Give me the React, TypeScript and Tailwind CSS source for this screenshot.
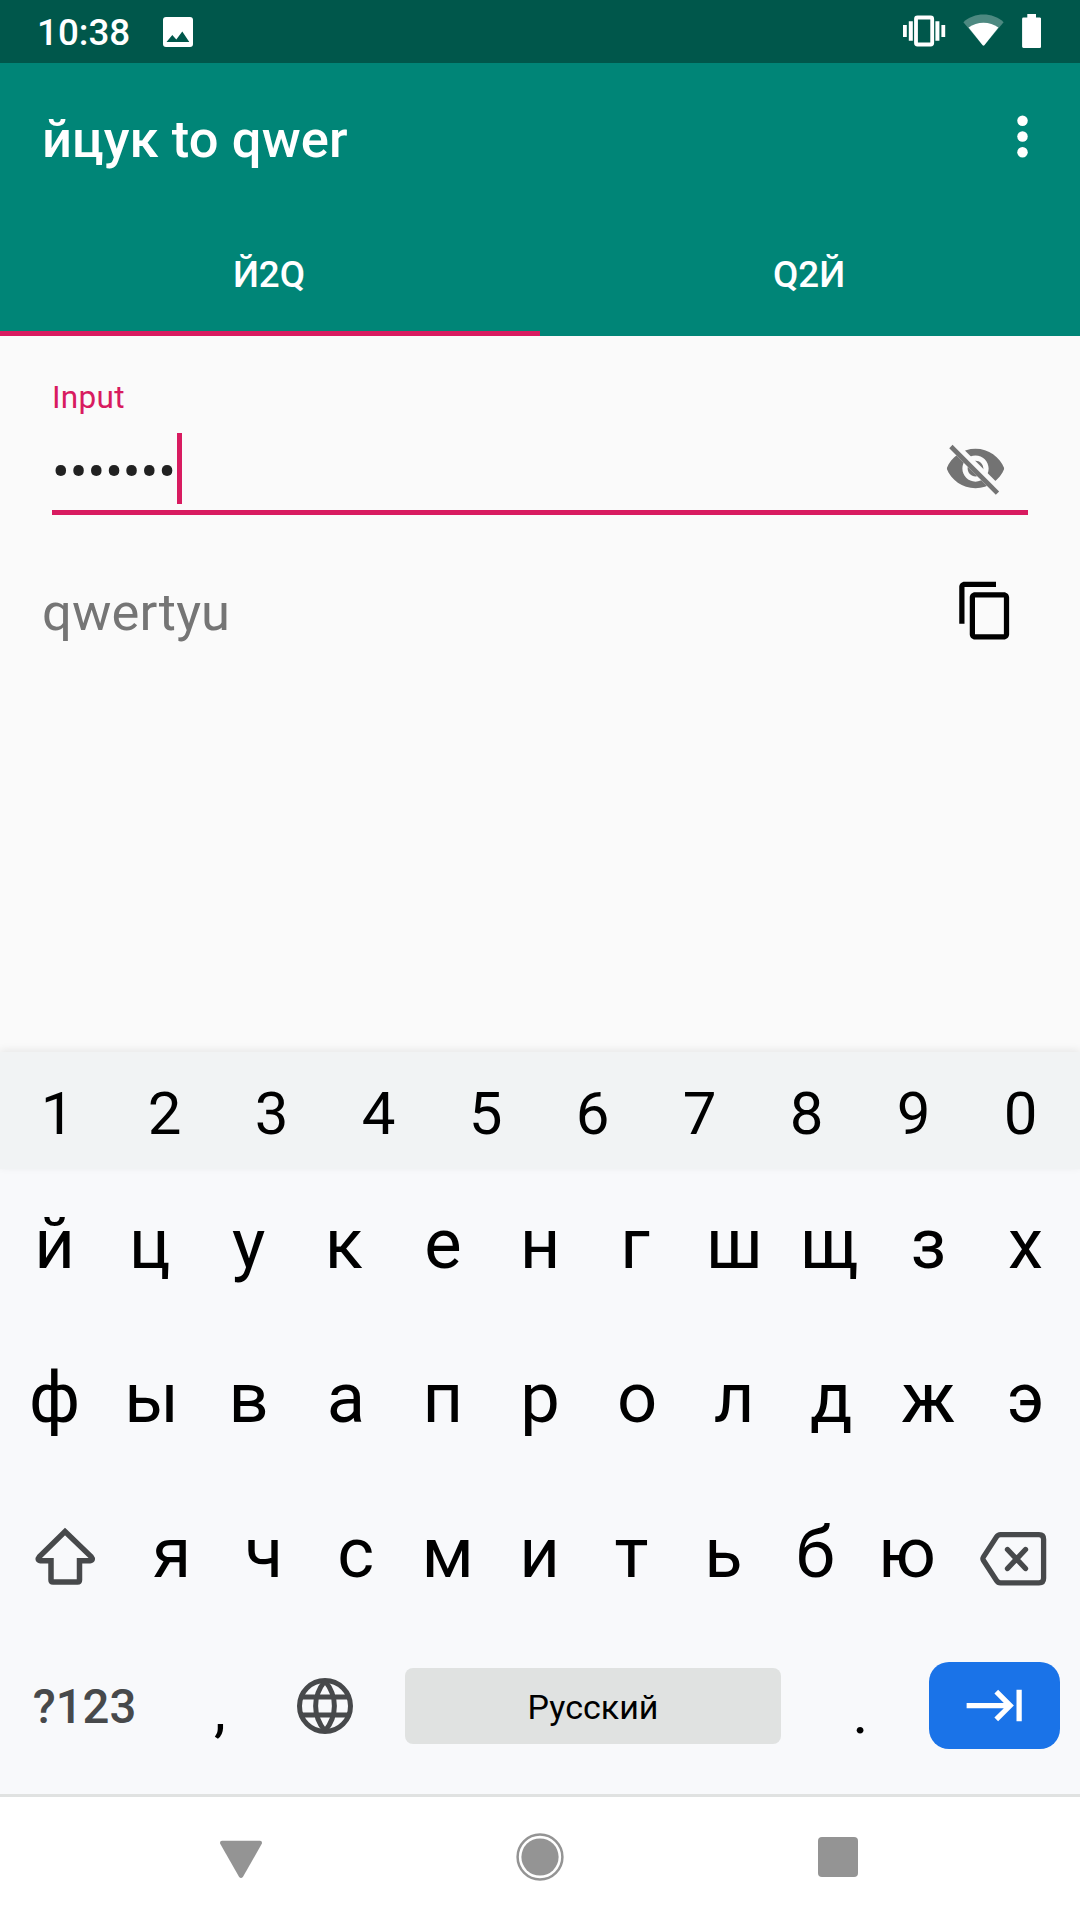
import React from 'react';

const digits = ['1', '2', '3', '4', '5', '6', '7', '8', '9', '0'];
const topRow = ['й', 'ц', 'у', 'к', 'е', 'н', 'г', 'ш', 'щ', 'з', 'х'];
const middleRow = ['ф', 'ы', 'в', 'а', 'п', 'р', 'о', 'л', 'д', 'ж', 'э'];
const bottomRow = ['я', 'ч', 'с', 'м', 'и', 'т', 'ь', 'б', 'ю'];

const leftHeavy = ['ц', 'к', 'г', 'щ'];

const StatusBar: React.FC = () => (
    <div className="h-[63px] bg-[#00574b] flex items-center justify-between pl-[37px] pr-[39px] text-white">
        <div className="flex items-center gap-[33px]">
            <span className="text-[36.75px] font-medium leading-none pt-[4px]">10:38</span>
            <svg width="30" height="30" viewBox="0 0 30 30">
                <rect width="30" height="30" rx="3" fill="#fff" />
                <path d="M3.500 25 9.300 18l4 4.600 6-8L26.300 25z" fill="#00574b" />
            </svg>
        </div>
        <svg className="mb-px" width="138" height="36" viewBox="0 0 138 36" fill="#fff">
            {/* Vibrate */}
            <path d="M0 12h3.800v12H0zM5.800 8.300h4v19.400h-4zM32.400 8.300h4v19.400h-4zM38.400 12h3.800v12h-3.800z" />
            <rect x="13" y="4.500" width="16.200" height="27" rx="1.500" fill="none" stroke="#fff" strokeWidth="3.800" />
            {/* Wifi */}
            <path d="M60.400 9.200C66 4.200 73 1.600 80.500 1.600s14.500 2.600 20.100 7.600L81.500 32q-1 1-2 0z" fillOpacity="0.3" />
            <path d="M65.600 14.600C70 11.500 75 9.700 80.500 9.700s10.500 1.800 14.900 4.900L81.500 32q-1 1-2 0z" />
            {/* Battery */}
            <path d="M124.300 1h8.700v3.500h3.700q1.400 0 1.400 1.400v27.700q0 1.400-1.400 1.400h-16.200q-1.400 0-1.400-1.400V5.900q0-1.400 1.400-1.400h3.800z" />
        </svg>
    </div>
);

const AppBar: React.FC = () => (
    <header className="bg-[#008577] text-white">
        <div className="h-[147px] flex items-center justify-between pl-[42px] pr-[26px]">
            <h1 className="text-[52.5px] font-medium leading-none tracking-[0.1px] pt-[6px]">йцук to qwer</h1>
            <svg width="63" height="63" viewBox="0 0 24 24" fill="#fff">
                <circle cx="12" cy="6" r="2" />
                <circle cx="12" cy="12" r="2" />
                <circle cx="12" cy="18" r="2" />
            </svg>
        </div>
        <div className="h-[126px] grid grid-cols-2 text-[36.75px] font-medium text-center leading-[130px]">
            <div className="border-b-[5px] border-[#d81b60] h-[126px] pr-[2px]">Й2Q</div>
            <div className="pr-[2px]">Q2Й</div>
        </div>
    </header>
);

const Content: React.FC = () => (
    <main className="h-[716px] bg-[#fafafa] pt-[42px]">
        <div className="ml-[52px] mr-[52px] h-[137px] border-b-[5px] border-[#d81b60]">
            <div className="text-[31.5px] leading-[40px] h-[38px] tracking-[0.3px] text-[#d81b60]">Input</div>
            <div className="flex items-center justify-between mt-[17px] h-[71px] pr-[21px]">
                <div className="flex items-center">
                    <span className="text-[52.5px] leading-[71px] pt-[7px] text-[#212121] w-[125px] whitespace-nowrap">•••••••</span>
                    <span className="w-[5px] h-[71px] bg-[#d81b60]" />
                </div>
                <svg width="63" height="63" viewBox="0 0 24 24" fill="#737373">
                    <clipPath id="strike">
                        <path d="M2 4.270 19.730 22 22.270 19.460 4.540 1.730V1H23v22H1V4.270z" />
                    </clipPath>
                    <path
                        clipPath="url(#strike)"
                        d="M12 4.500C7 4.500 2.730 7.610 1 12c1.730 4.390 6 7.500 11 7.500s9.270-3.110 11-7.500c-1.730-4.390-6-7.500-11-7.500zM12 17c-2.760 0-5-2.240-5-5s2.240-5 5-5 5 2.240 5 5-2.240 5-5 5zM12 9c-1.660 0-3 1.340-3 3s1.340 3 3 3 3-1.340 3-3-1.340-3-3-3z"
                    />
                    <path d="M3.270 4.270 19.740 20.740" stroke="#737373" strokeWidth="1.800" strokeLinecap="square" />
                </svg>
            </div>
        </div>
        <div className="flex items-center justify-between pl-[42px] pr-[63px] mt-[63px] h-[65px]">
            <span className="text-[52.5px] leading-[65px] tracking-[0.15px] text-[#757575] pt-[4px]">qwertyu</span>
            <svg width="63" height="63" viewBox="0 0 24 24">
                <path d="M16 1H4c-1.100 0-2 .9-2 2v14h2V3h12V1zm3 4H8c-1.100 0-2 .9-2 2v14c0 1.100.9 2 2 2h11c1.100 0 2-.9 2-2V7c0-1.100-.9-2-2-2zm0 16H8V7h11v14z" />
            </svg>
        </div>
    </main>
);

const Keyboard: React.FC = () => (
    <section className="bg-[#f8f9fb] text-black h-[742px]">
        <div className="relative grid grid-cols-10 h-[117px] pl-[4px] pr-[6px] bg-[#f1f3f4] text-[60px] leading-[123px] text-center shadow-[0_-2px_8px_rgba(0,0,0,0.08)]">
            {digits.map((d) => (
                <span key={d}>{d}</span>
            ))}
        </div>

        <div className="grid grid-cols-11 h-[154px] px-[6px] text-[70.5px] leading-[151px] text-center">
            {topRow.map((k) => (
                <span key={k} className={leftHeavy.includes(k) ? 'pr-1' : ''}>{k}</span>
            ))}
        </div>
        <div className="grid grid-cols-11 h-[155px] px-[6px] text-[70.5px] leading-[150px] text-center">
            {middleRow.map((k) => (
                <span key={k}>{k}</span>
            ))}
        </div>

        <div className="flex h-[155px] px-[6px] text-[70.5px] leading-[150px] text-center">
            <div className="w-[120px] flex justify-center pt-[48px]">
                <svg width="64" height="64" viewBox="0 0 64 64" fill="none" stroke="#47494b" strokeWidth="5.500">
                    <path d="M31 5.500 57 30.500q3 3.700-1 4.200H45.500V54q0 2-2 2H19q-2 0-2-2V34.700H6.500q-4-.5-1-4.200z" />
                </svg>
            </div>
            <div className="grid grid-cols-9 flex-1">
                {bottomRow.map((k) => (
                    <span key={k}>{k}</span>
                ))}
            </div>
            <div className="w-[121px] flex justify-center pt-[51px] pr-[2px]">
                <svg width="68" height="60" viewBox="0 0 68 60" fill="none" stroke="#47494b" strokeWidth="5.300">
                    <path d="M21.500 5.600H60q4.600 0 4.600 4.600v39q0 4.600-4.600 4.600H21.500q-2.500 0-4-2.300L4.500 31.500q-1.200-1.800 0-3.600L17.500 7.900q1.500-2.300 4-2.300z" />
                    <path d="M28.500 20.500 46.500 39.500M46.500 20.500 28.500 39.500" strokeLinecap="round" />
                </svg>
            </div>
        </div>

        <div className="flex h-[161px]">
            <span className="w-[169px] text-center text-[47.25px] font-medium leading-[128px] pt-[10px] text-[#47494b]">?123</span>
            <span className="w-[102px] text-center text-[60px] leading-none pt-[47px]">,</span>
            <div className="w-[134px] pl-[25px] pt-[44px]">
                <svg width="58" height="58" viewBox="0 0 58 58" fill="none" stroke="#47494b" strokeWidth="5">
                    <circle cx="29" cy="29" r="25.500" />
                    <path d="M5 20h48M5 38h48M29 4c-12.500 15-12.500 35 0 50M29 4c12.500 15 12.500 35 0 50" />
                </svg>
            </div>
            <div className="w-[376px] h-[76px] mt-[35px] rounded-[8px] bg-[#e0e2e1] text-center text-[34px] leading-[78px]">Русский</div>
            <span className="w-[148px] text-center pl-[11px] text-[60px] leading-none pt-[50px]">.</span>
            <div className="w-[131px] h-[87px] mt-[29px] rounded-[20px] bg-[#1a73e8] flex items-center justify-center pl-[2px]">
                <svg width="63" height="63" viewBox="0 0 24 24" fill="#fff">
                    <path d="M11.590 7.410 15.170 11H1v2h14.170l-3.590 3.590L13 18l6-6-6-6-1.410 1.410zM20 6v12h2V6h-2z" />
                </svg>
            </div>
        </div>
    </section>
);

const NavBar: React.FC = () => (
    <nav className="h-[126px] bg-white border-t-[3px] border-[#e0e2e1] flex justify-between pl-[220px] pr-[222px]">
        <svg className="mt-[43px]" width="42" height="39" viewBox="0 0 42 39" fill="#949494">
            <path d="M2 .8h38q2.600.2 1.800 3L23 36.800q-2 2.400-4 0L.2 3.800Q-.6 1 2 .8z" />
        </svg>
        <svg className="mt-[36px]" width="48" height="48" viewBox="0 0 48 48" fill="#949494">
            <circle cx="24" cy="24" r="22.400" fill="none" stroke="#949494" strokeWidth="2.500" />
            <circle cx="24" cy="24" r="18.600" />
        </svg>
        <div className="mt-[40px] w-[40px] h-[40px] rounded-[4px] bg-[#949494]" />
    </nav>
);

const App: React.FC = () => {
    return (
        <div className="w-[1080px] h-[1920px] overflow-hidden bg-white font-[Roboto,sans-serif]">
            <StatusBar />
            <AppBar />
            <Content />
            <Keyboard />
            <NavBar />
        </div>
    );
};

export default App;
